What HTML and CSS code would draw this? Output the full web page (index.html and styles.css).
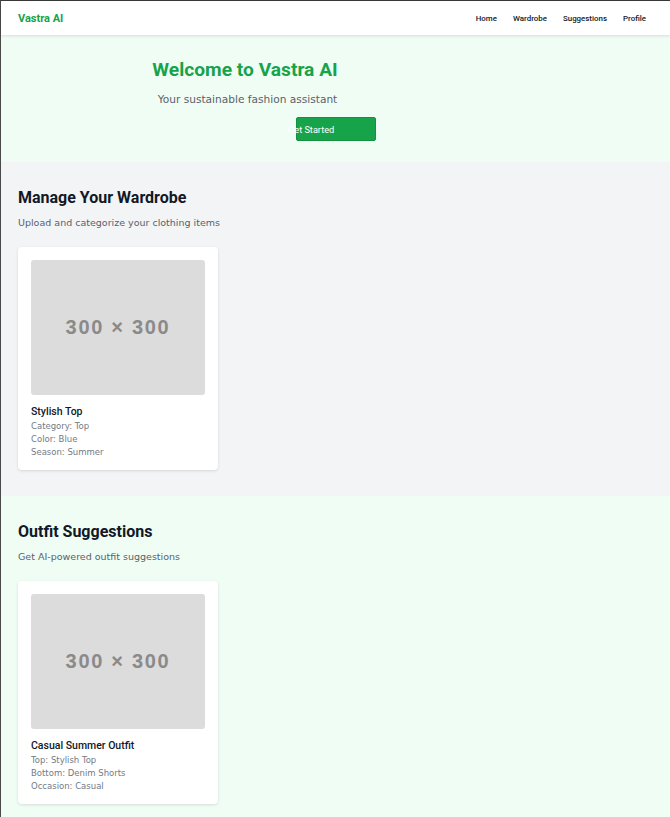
FILE: index.html
```html
<!DOCTYPE html>
<html lang="en">
<head>
<meta charset="utf-8">
<title>Vastra AI</title>
<link rel="stylesheet" href="styles.css">
</head>
<body>
<div class="frame">
  <header class="navbar">
    <div class="logo">Vastra AI</div>
    <nav class="nav-links">
      <a href="#">Home</a>
      <a href="#">Wardrobe</a>
      <a href="#">Suggestions</a>
      <a href="#">Profile</a>
    </nav>
  </header>

  <section class="hero">
    <div class="hero-inner">
      <h1 class="hero-title">Welcome to Vastra AI</h1>
      <p class="hero-sub">Your sustainable fashion assistant</p>
      <div class="hero-actions">
        <button class="btn-primary"><span class="btn-label">Get Started</span></button>
      </div>
    </div>
  </section>

  <section class="section section-gray">
    <h2 class="section-title">Manage Your Wardrobe</h2>
    <p class="section-sub">Upload and categorize your clothing items</p>
    <div class="card-grid">
      <div class="card">
        <div class="placeholder">300 × 300</div>
        <h3 class="card-title">Stylish Top</h3>
        <p class="card-line">Category: Top</p>
        <p class="card-line">Color: Blue</p>
        <p class="card-line">Season: Summer</p>
      </div>
    </div>
  </section>

  <section class="section section-green">
    <h2 class="section-title">Outfit Suggestions</h2>
    <p class="section-sub">Get AI-powered outfit suggestions</p>
    <div class="card-grid">
      <div class="card">
        <div class="placeholder">300 × 300</div>
        <h3 class="card-title">Casual Summer Outfit</h3>
        <p class="card-line">Top: Stylish Top</p>
        <p class="card-line">Bottom: Denim Shorts</p>
        <p class="card-line">Occasion: Casual</p>
      </div>
    </div>
  </section>
</div>
</body>
</html>
```

FILE: styles.css
```css
* { box-sizing: border-box; }

html, body {
  margin: 0;
  padding: 0;
  height: 100%;
}

body {
  font-family: "DejaVu Sans", "Open Sans", sans-serif;
  background: #f0fdf4;
}

.frame {
  min-height: 100%;
  border-top: 1px solid #3a3a3a;
  border-left: 1px solid #4a4a4a;
  background: #f0fdf4;
}

.navbar {
  height: 34px;
  background: #ffffff;
  display: flex;
  align-items: center;
  justify-content: space-between;
  padding: 0 24px 0 17px;
  box-shadow: 0 1px 3px rgba(0, 0, 0, 0.12);
  position: relative;
  z-index: 1;
}

.logo {
  font-family: Roboto, sans-serif;
  font-weight: 700;
  font-size: 11px;
  color: #16a34a;
}

.nav-links {
  display: flex;
  gap: 16px;
}

.nav-links a {
  font-family: Roboto, sans-serif;
  font-weight: 500;
  font-size: 7.9px;
  color: #111827;
  text-decoration: none;
}

.hero {
  background: #f0fdf4;
  height: 127px;
  padding-top: 22px;
}

.hero-inner {
  width: 488px;
  text-align: center;
}

.hero-title {
  margin: 0;
  font-family: Roboto, sans-serif;
  font-weight: 700;
  font-size: 19.2px;
  line-height: 26px;
  color: #16a34a;
}

.hero-sub {
  margin: 9px 0 0 5px;
  font-size: 10.6px;
  line-height: 14px;
  color: #59616d;
}

.hero-actions {
  display: flex;
  margin-top: 11px;
  padding-left: 295px;
}

.btn-primary {
  width: 80px;
  height: 24px;
  background: #16a34a;
  border: 1px solid #15903f;
  border-radius: 2px;
  padding: 0;
  display: flex;
  align-items: center;
  font-family: Roboto, sans-serif;
  font-size: 9.2px;
  color: #ffffff;
  overflow: visible;
}

.btn-label {
  margin-left: -9px;
  white-space: nowrap;
}

.section {
  padding: 26px 17px 26px 17px;
}

.section-gray {
  background: #f3f4f6;
  height: 334px;
}

.section-green {
  background: #f0fdf4;
}

.section-title {
  margin: 0;
  font-family: Roboto, sans-serif;
  font-weight: 700;
  font-size: 16px;
  line-height: 20px;
  color: #111827;
}

.section-sub {
  margin: 9px 0 0 0;
  font-size: 9.5px;
  line-height: 12px;
  color: #59616d;
}

.card-grid {
  display: grid;
  grid-template-columns: 200px;
  margin-top: 18px;
}

.card {
  background: #ffffff;
  border-radius: 4px;
  box-shadow: 0 1px 3px rgba(0, 0, 0, 0.12);
  padding: 13px 13px 11px 13px;
}

.placeholder {
  height: 135px;
  background: #dcdcdc;
  border-radius: 3px;
  display: flex;
  align-items: center;
  justify-content: center;
  font-family: "Liberation Sans", Arial, sans-serif;
  font-weight: 700;
  font-size: 20px;
  letter-spacing: 1.7px;
  color: #8a8a8a;
}

.card-title {
  margin: 10px 0 2px 0;
  font-family: Roboto, sans-serif;
  font-weight: 500;
  font-size: 10.5px;
  line-height: 13px;
  color: #111827;
}

.card-line {
  margin: 0;
  font-size: 8.5px;
  line-height: 13px;
  color: #737a86;
}
```
